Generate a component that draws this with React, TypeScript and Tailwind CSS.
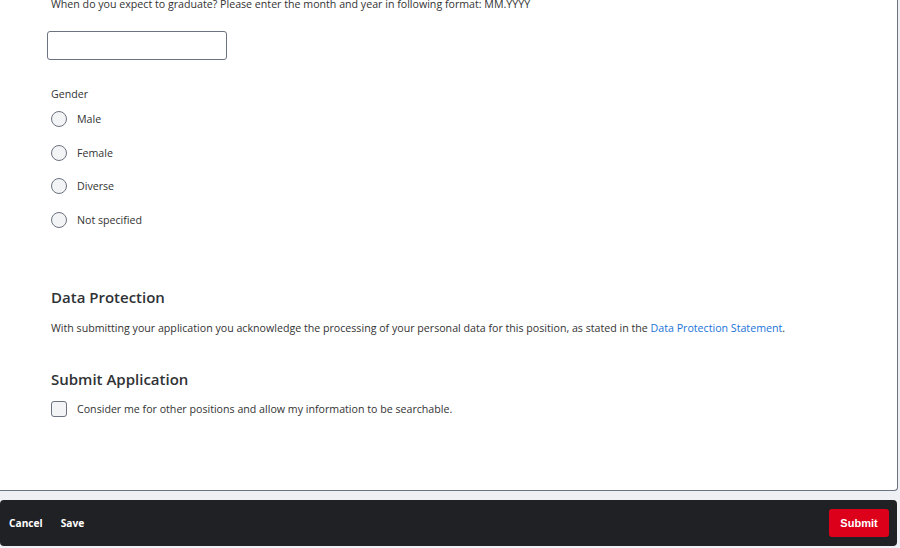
const font = { fontFamily: '"Open Sans", "Noto Sans", sans-serif' };

const genders = ['Male', 'Female', 'Diverse', 'Not specified'];

export default function App() {
  return (
    <div className="h-[548px] w-[900px] overflow-hidden bg-[#eef0f3] flex flex-col text-[#333] text-[10.65px]" style={font}>
      <div className="h-[491px] w-[898px] shrink-0 bg-white border-r border-b border-[#6b7280] rounded-br-[4px] pl-[51px] flex flex-col">
        <p className="mt-[-3px] leading-[14px]">
          When do you expect to graduate? Please enter the month and year in following format: MM.YYYY
        </p>
        <input
          type="text"
          className="mt-[20px] ml-[-4px] w-[180px] h-[29px] border border-[#6b7280] rounded-[3px] outline-none"
        />
        <p className="mt-[27px] leading-[14px]">Gender</p>
        <div className="mt-[10px] flex flex-col gap-[17.7px]">
          {genders.map(g => (
            <label key={g} className="flex items-center gap-[10px] h-[16px]">
              <span className="w-[16px] h-[16px] rounded-full border border-[#6b7280] bg-[#f3f4f6]" />
              <span className="leading-[14px]">{g}</span>
            </label>
          ))}
        </div>
        <h2 className="mt-[59px] text-[15px] font-semibold leading-[20px] text-[#2f3235]">Data Protection</h2>
        <p className="mt-[14px] leading-[14px]">
          With submitting your application you acknowledge the processing of your personal data for this position, as stated in the{' '}
          <a href="#" className="text-[#1a73d9]">Data Protection Statement</a>.
        </p>
        <h2 className="mt-[34px] text-[15px] font-semibold leading-[20px] text-[#2f3235]">Submit Application</h2>
        <label className="mt-[12px] flex items-center gap-[10px]">
          <span className="w-[16px] h-[16px] rounded-[3px] border border-[#6b7280] bg-[#f3f4f6]" />
          <span className="leading-[14px]">Consider me for other positions and allow my information to be searchable.</span>
        </label>
      </div>
      <div className="mt-[9px] h-[46px] w-[897px] shrink-0 bg-[#202124] rounded-[4px] flex items-center px-[9px]">
        <button className="pt-[2px] text-white font-bold text-[10.2px]">Cancel</button>
        <button className="pt-[2px] ml-[18px] text-white font-bold text-[10.2px]">Save</button>
        <button
          className="ml-auto mr-[-1px] w-[60px] h-[28px] bg-[#dc001b] rounded-[3px] text-white font-bold text-[11px]"
          style={{ fontFamily: '"Liberation Sans", Arial, sans-serif' }}
        >
          Submit
        </button>
      </div>
    </div>
  );
}
